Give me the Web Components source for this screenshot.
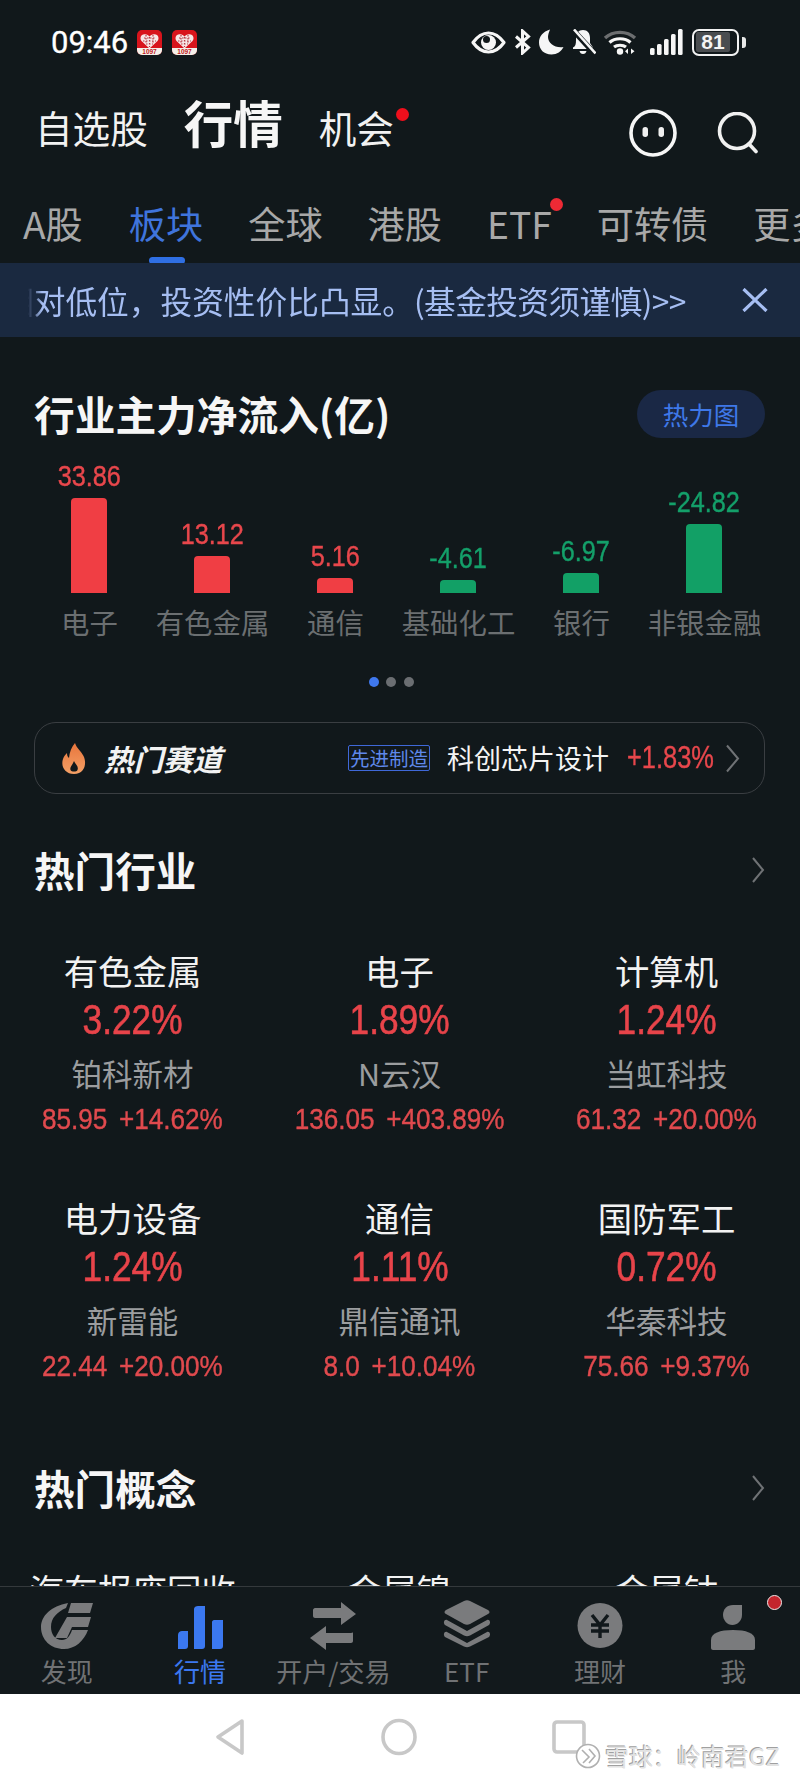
<!DOCTYPE html>
<html lang="zh-CN">
<head>
<meta charset="utf-8">
<title>行情</title>
<style>
  html, body { margin: 0; padding: 0; background: #11181b; }
  body { width: 800px; height: 1780px; overflow: hidden; font-family: "Noto Sans CJK SC", "Noto Sans", sans-serif; }
</style>
</head>
<body>
<stock-app>
  <status-bar></status-bar>
  <top-nav></top-nav>
  <market-tabs></market-tabs>
  <notice-banner>相对低位，投资性价比凸显。<span style="letter-spacing:-.6px">(基金投资须谨慎)&gt;&gt;</span></notice-banner>
  <main-scroll>
    <flow-chart></flow-chart>
    <hot-track></hot-track>
    <section-head>热门行业</section-head>
    <sector-grid>
      <sector-cell name="有色金属" pct="3.22%" stock="铂科新材" price="85.95" chg="+14.62%"></sector-cell>
      <sector-cell name="电子" pct="1.89%" stock="N云汉" price="136.05" chg="+403.89%"></sector-cell>
      <sector-cell name="计算机" pct="1.24%" stock="当虹科技" price="61.32" chg="+20.00%"></sector-cell>
      <sector-cell name="电力设备" pct="1.24%" stock="新雷能" price="22.44" chg="+20.00%"></sector-cell>
      <sector-cell name="通信" pct="1.11%" stock="鼎信通讯" price="8.0" chg="+10.04%"></sector-cell>
      <sector-cell name="国防军工" pct="0.72%" stock="华秦科技" price="75.66" chg="+9.37%"></sector-cell>
    </sector-grid>
    <section-head class="second">热门概念</section-head>
    <sector-grid class="third">
      <sector-cell name="汽车报废回收"></sector-cell>
      <sector-cell name="金属镍"></sector-cell>
      <sector-cell name="金属钴"></sector-cell>
    </sector-grid>
  </main-scroll>
  <bottom-nav></bottom-nav>
  <system-bar></system-bar>
</stock-app>

<script>
// shared font stacks
const CJK = '"Noto Sans CJK SC", "Noto Sans", sans-serif';
// the app's figures are a narrow DIN style face, squeezed with scaleX where they are used
const NUM = '"Liberation Sans", sans-serif';

// small helper, every element below attaches its root the same way
function shadow(el, css, html) {
  el.attachShadow({ mode: 'open' });
  el.shadowRoot.innerHTML = `<style>${css}</style>${html}`;
}

class StockApp extends HTMLElement {
  constructor() {
    super();
    shadow(this, `
      :host { display: flex; flex-direction: column; width: 800px; height: 1780px; position: relative;
        background: #11181b; color: #f2f2f2; font-family: ${CJK}; overflow: hidden; }
    `, `<slot></slot>`);
  }
}

class StatusBar extends HTMLElement {
  constructor() {
    super();
    const heart = `
      <svg width="25" height="25" viewBox="0 0 25 25">
        <rect width="25" height="25" rx="5" fill="#d8141c"/>
        <path d="M0 18H25V20A5 5 0 0 1 20 25H5A5 5 0 0 1 0 20Z" fill="#f4f0ea"/>
        <path d="M12.5 18.5L4.5 11C2.5 8.5 3.5 4.5 7.5 4.2C9.8 4 11.5 5 12.5 6.5C13.5 5 15.2 4 17.5 4.2C21.5 4.5 22.5 8.5 20.5 11Z" fill="#f6e6e6"/>
        <path d="M7 8L18 8M6 11L19 11M9 14L16 14M9 5V14M12.5 7V17M16 5V14" stroke="#b83a44" stroke-width="1.2" stroke-dasharray="1.5 1.5"/>
        <text x="12.5" y="24" font-size="6.5" font-weight="700" text-anchor="middle" fill="#c01820" font-family="Liberation Sans">1097</text>
      </svg>`;
    shadow(this, `
      :host { display: flex; align-items: center; height: 84px; padding: 0 54px 0 51px; box-sizing: border-box; flex: none; }
      .time { font: 400 31px/1 Roboto, sans-serif; color: #fff; margin-right: 9px; -webkit-text-stroke: .3px #fff; }
      .hearts { display: flex; gap: 10px; }
      .right { margin-left: auto; display: flex; align-items: center; }
      svg { display: block; flex: none; }
      .batt { width: 47px; height: 27px; box-sizing: border-box; border: 2.5px solid #f2f2f2; border-radius: 7px;
        margin-left: 9px; position: relative; padding: 1.5px; }
      .batt i { display: block; height: 100%; width: 85%; background: #4a4d50; border-radius: 2px; }
      .batt b { position: absolute; left: 6px; top: 0; width: 26px; text-align: center; font: 700 21px/22px "Liberation Sans", sans-serif; color: #f4f4f4; }
      .nub { width: 4px; height: 11px; background: #e8e8e8; border-radius: 0 3px 3px 0; margin-left: 3px; }
    `, `
      <span class="time">09:46</span>
      <div class="hearts">${heart}${heart}</div>
      <div class="right">
        <svg width="35" height="23" viewBox="0 0 35 23" style="margin-right:8px">
          <path d="M2 11.5C7 4.5 12 2 17.5 2S28 4.5 33 11.5C28 18.5 23 21 17.5 21S7 18.5 2 11.5Z" fill="none" stroke="#f6f6f6" stroke-width="3.2" stroke-linejoin="round"/>
          <circle cx="17.5" cy="11.5" r="7.5" fill="#f6f6f6"/><circle cx="15.5" cy="8.5" r="3.5" fill="#11181b"/>
        </svg>
        <svg width="17" height="26" viewBox="0 0 17 26" style="margin-right:8px">
          <path d="M2 7.5L14.5 18.5L8.5 24V2L14.5 7.5L2 18.5" fill="none" stroke="#f6f6f6" stroke-width="3"/>
        </svg>
        <svg width="25" height="26" viewBox="0 0 25 26" style="margin-right:7px">
          <path d="M11 0.5C4 2.5 0 7.5 0 13.5C0 20.5 5 25.5 12.5 25.5C18 25.5 22.5 22.5 24.5 18C16.5 19.5 9 14.5 9 8C9 5.5 10 3 11 0.5Z" fill="#f6f6f6"/>
        </svg>
        <svg width="25" height="26" viewBox="0 0 25 26" style="margin-right:7px">
          <path d="M12 1C16.5 1 19 4 19 9V14L22 18.5V20H2V18.5C4.5 17.5 5 15 5 11V9C5 4 7.5 1 12 1Z" fill="#f6f6f6"/>
          <path d="M8.5 22H15.5C15 24 14 25 12 25S9 24 8.5 22Z" fill="#f6f6f6"/>
          <path d="M2 1L24 25" stroke="#11181b" stroke-width="5.5"/>
          <path d="M3 0.5L24.5 24.5" stroke="#f6f6f6" stroke-width="2.6"/>
        </svg>
        <svg width="34" height="26" viewBox="0 0 34 26" style="margin-right:13px">
          <path d="M2 9C10 1.5 24 1.5 32 9" fill="none" stroke="#6c6e70" stroke-width="3.4"/>
          <path d="M6.5 13.5C12 8.5 22 8.5 27.5 13.5" fill="none" stroke="#f6f6f6" stroke-width="3.2"/>
          <path d="M11 18C14 15.5 20 15.5 23 18" fill="none" stroke="#f6f6f6" stroke-width="3"/>
          <circle cx="17" cy="22.5" r="3.2" fill="#f6f6f6"/>
          <path d="M25 19.5V25L22 22.2ZM28 19.5V25L31.5 22.2Z" fill="#f6f6f6"/>
        </svg>
        <svg width="33" height="26" viewBox="0 0 33 26">
          <rect x="0" y="19" width="4.6" height="7" rx="1.5" fill="#f6f6f6"/>
          <rect x="7" y="15" width="4.6" height="11" rx="1.5" fill="#f6f6f6"/>
          <rect x="14" y="10" width="4.6" height="16" rx="1.5" fill="#f6f6f6"/>
          <rect x="21" y="5" width="4.6" height="21" rx="1.5" fill="#f6f6f6"/>
          <rect x="28" y="0" width="4.6" height="26" rx="1.5" fill="#f6f6f6"/>
        </svg>
        <div class="batt"><i></i><b>81</b></div><div class="nub"></div>
      </div>
    `);
  }
}

class TopNav extends HTMLElement {
  constructor() {
    super();
    shadow(this, `
      :host { display: flex; align-items: center; height: 86px; padding: 0 41px 0 35px; box-sizing: border-box; flex: none; }
      .links { display: flex; align-items: baseline; gap: 36px; margin-top: -6px; }
      span { font-size: 37.6px; line-height: 60px; color: #f2f2f2; position: relative; }
      .on { font-size: 49.5px; font-weight: 700; color: #f6f6f6; }
      .dot::after { content: ""; position: absolute; left: 77px; top: 11px; width: 13px; height: 13px; border-radius: 50%; background: #ef0f1c; }
      .tools { margin-left: auto; display: flex; align-items: center; gap: 40px; padding-top: 12px; }
      svg { display: block; }
    `, `
      <div class="links"><span>自选股</span><span class="on">行情</span><span class="dot">机会</span></div>
      <div class="tools">
        <svg width="48" height="48" viewBox="0 0 48 48">
          <circle cx="24" cy="24" r="22" fill="none" stroke="#f6f6f6" stroke-width="3.6"/>
          <rect x="13.5" y="18" width="5.5" height="10" rx="2.7" fill="#f0f0f0"/><rect x="29.5" y="18" width="5.5" height="10" rx="2.7" fill="#f0f0f0"/>
        </svg>
        <svg width="42" height="42" viewBox="0 0 42 42">
          <circle cx="20" cy="19" r="17.5" fill="none" stroke="#f0f0f0" stroke-width="3.6"/>
          <path d="M32 32L39 39.5" stroke="#f0f0f0" stroke-width="3.6" stroke-linecap="round"/>
        </svg>
      </div>
    `);
  }
}

class MarketTabs extends HTMLElement {
  constructor() {
    super();
    const tabs = ['A股', '板块', '全球', '港股', 'ETF', '可转债', '更多'];
    shadow(this, `
      :host { display: flex; align-items: flex-start; gap: 45px; height: 93px; padding: 23px 0 0 23px; box-sizing: border-box;
        flex: none; overflow: hidden; white-space: nowrap; position: relative; z-index: 1; }
      span { font-size: 37.2px; line-height: 60px; color: #a8a8a8; position: relative; flex: none; }
      .on { color: #3f74dc; margin-left: 1px; }
      .on::after { content: ""; position: absolute; left: 20px; top: 64px; width: 36px; height: 7px; border-radius: 3.5px; background: #2f6fe4; }
      .dot::after { content: ""; position: absolute; right: -11px; top: 5px; width: 13px; height: 13px; border-radius: 50%; background: #ee2a35; }
    `, tabs.map((t, i) => `<span class="${i === 1 ? 'on' : ''}${t === 'ETF' ? 'dot' : ''}">${t}</span>`).join(''));
  }
}

class NoticeBanner extends HTMLElement {
  constructor() {
    super();
    shadow(this, `
      :host { display: flex; align-items: center; height: 74px; background: #1a2940; flex: none; padding: 0 32px 0 28px; box-sizing: border-box; }
      .view { width: 670px; overflow: hidden; white-space: nowrap; -webkit-mask-image: linear-gradient(90deg, transparent 0, #000 14px); mask-image: linear-gradient(90deg, transparent 0, #000 14px); }
      .text { display: block; margin-left: -26px; font-size: 31.7px; line-height: 44px; color: #a6bef2; }
      svg { margin-left: auto; display: block; flex: none; }
    `, `
      <div class="view"><span class="text"><slot></slot></span></div>
      <svg width="26" height="24" viewBox="0 0 26 24"><path d="M1.5 1L24.5 23M24.5 1L1.5 23" stroke="#a6bef2" stroke-width="3.2"/></svg>
    `);
  }
}

class MainScroll extends HTMLElement {
  constructor() {
    super();
    shadow(this, `
      :host { display: block; flex: 1; min-height: 0; overflow: hidden; padding-top: 53px; box-sizing: border-box; }
      ::slotted(section-head.second) { margin-top: 81px; }
      ::slotted(sector-grid.third) { margin-top: 56px; }
    `, `<slot></slot>`);
  }
}

class FlowChart extends HTMLElement {
  constructor() {
    super();
    const rows = [
      ['33.86', 95, '电子', 'up'], ['13.12', 37, '有色金属', 'up'], ['5.16', 15, '通信', 'up'],
      ['-4.61', 13, '基础化工', 'down'], ['-6.97', 20, '银行', 'down'], ['-24.82', 69, '非银金融', 'down']
    ];
    shadow(this, `
      :host { display: block; }
      .head { display: flex; align-items: center; justify-content: space-between; height: 48px; padding: 0 35px 0 34px; }
      h2 { margin: 0; font-size: 40.7px; line-height: 48px; font-weight: 700; color: #f6f6f6; }
      .btn { width: 128px; height: 48px; border-radius: 24px; background: #1a2845; color: #3f78e8; font-size: 25.5px; line-height: 48px; text-align: center; }
      .bars { display: grid; grid-template-columns: repeat(6, 123px); margin-left: 28px; }
      .col { display: flex; flex-direction: column; align-items: center; }
      .top { height: 155px; display: flex; flex-direction: column; justify-content: flex-end; align-items: center; }
      .val { font: 400 29px/30px ${NUM}; margin-bottom: 7px; white-space: nowrap; transform: scaleX(.87); -webkit-text-stroke: .4px currentColor; }
      .bar { width: 36px; border-radius: 4px 4px 0 0; }
      .up .val { color: #e8474c; } .up .bar { background: #f03e44; }
      .down .val { color: #14a06a; } .down .bar { background: #12a066; }
      .cat { margin-top: 9px; font-size: 28.4px; line-height: 40px; color: #6b6f71; white-space: nowrap; }
      .dots { display: flex; justify-content: center; gap: 7.5px; margin-top: 35px; padding-right: 18px; }
      .dots i { width: 10px; height: 10px; border-radius: 50%; background: #6b6e72; }
      .dots i:first-child { background: #3f78ee; }
    `, `
      <div class="head"><h2>行业主力净流入(亿)</h2><div class="btn">热力图</div></div>
      <div class="bars">
        ${rows.map(r => `<div class="col ${r[3]}"><div class="top"><span class="val">${r[0]}</span><div class="bar" style="height:${r[1]}px"></div></div><span class="cat">${r[2]}</span></div>`).join('')}
      </div>
      <div class="dots"><i></i><i></i><i></i></div>
    `);
  }
}

class HotTrack extends HTMLElement {
  constructor() {
    super();
    shadow(this, `
      :host { display: flex; align-items: center; height: 72px; margin: 35px 35px 0 34px; box-sizing: border-box;
        border: 1.5px solid #3a3e42; border-radius: 22px; padding: 0 24px 0 27px; white-space: nowrap; }
      svg { display: block; flex: none; }
      .title { margin-left: 18px; font-size: 29.5px; font-weight: 700; font-style: italic; color: #f2f2f2; line-height: 40px; }
      .tag { margin-left: auto; width: 82px; height: 26px; box-sizing: border-box; border: 1.5px solid #3f68d8; border-radius: 2px;
        font-size: 19.5px; line-height: 23px; color: #5f88ea; text-align: center; }
      .name { margin-left: 17px; font-size: 27px; line-height: 40px; color: #f4f4f4; }
      .pct { margin-left: 18px; width: 86px; flex: none; font: 400 31px/40px ${NUM}; color: #e8474c; transform: scaleX(.82); transform-origin: left center; -webkit-text-stroke: .4px currentColor; }
      .chev { margin-left: 12px; }
    `, `
      <svg width="24" height="31" viewBox="0 0 24 31">
        <defs><linearGradient id="fl" x1="0" y1="0" x2="0" y2="1"><stop offset="0" stop-color="#e8753c"/><stop offset="1" stop-color="#f4a066"/></linearGradient></defs>
        <path d="M13 0C14.5 5 19 8 21.5 13C25 20 23 31 12 31C3 31 -1.5 23 1 16C2 13 3.5 11.5 5 10C5 12 5.5 14 7 15C7.5 9 9.5 4 13 0Z" fill="url(#fl)"/>
        <path d="M12 18C13 21 17 23 15.5 27C14.8 29 9.5 29.3 8.5 27C7.5 24 10.5 22 12 18Z" fill="#11181b"/>
      </svg>
      <span class="title">热门赛道</span>
      <span class="tag">先进制造</span>
      <span class="name">科创芯片设计</span>
      <span class="pct">+1.83%</span>
      <svg class="chev" width="15" height="29" viewBox="0 0 15 29"><path d="M2 1.5L13 14.5L2 27.5" fill="none" stroke="#6f7275" stroke-width="2"/></svg>
    `);
  }
}

class SectionHead extends HTMLElement {
  constructor() {
    super();
    shadow(this, `
      :host { display: flex; align-items: center; justify-content: space-between; height: 50px; margin-top: 51px; padding: 0 35px 0 34px; }
      h2 { margin: 0; font-size: 40.6px; line-height: 50px; font-weight: 700; color: #f6f6f6; }
      svg { display: block; }
    `, `
      <h2><slot></slot></h2>
      <svg width="14" height="28" viewBox="0 0 14 28"><path d="M2 2L12 14L2 26" fill="none" stroke="#6f7275" stroke-width="2"/></svg>
    `);
  }
}

class SectorGrid extends HTMLElement {
  constructor() {
    super();
    shadow(this, `
      :host { display: grid; grid-template-columns: repeat(3, 267px); row-gap: 62px; margin: 55px 0 0 -1px; }
    `, `<slot></slot>`);
  }
}

class SectorCell extends HTMLElement {
  connectedCallback() {
    const a = n => this.getAttribute(n);
    const detail = a('pct') ? `
      <div class="pct">${a('pct')}</div>
      <div class="stock">${a('stock')}</div>
      <div class="line"><span>${a('price')}</span><span>${a('chg')}</span></div>` : '';
    shadow(this, `
      :host { display: flex; flex-direction: column; align-items: center; white-space: nowrap; }
      .name { font-size: 34.4px; line-height: 40px; color: #f2f2f2; }
      .pct { margin-top: 8px; font: 400 42px/44px ${NUM}; color: #e8444a; transform: scaleX(.84); -webkit-text-stroke: .6px currentColor; }
      .stock { margin-top: 13px; font-size: 30.5px; line-height: 36px; color: #9b9d9f; }
      .line { margin-top: 12px; display: flex; gap: 13px; font: 400 29px/32px ${NUM}; color: #e04a4e; transform: scaleX(.9); -webkit-text-stroke: .4px currentColor; }
    `, `<div class="name">${a('name')}</div>${detail}`);
  }
}

class BottomNav extends HTMLElement {
  constructor() {
    super();
    const g = '#7a7b7d';
    const items = [
      ['发现', `<svg width="54" height="50" viewBox="0 0 54 50"><g transform="translate(1 3)" fill="${g}">
        <path d="M27 0C10 3 0 13 0 24C0 37 10 46 23 46C34 46 43 38 47 27H31C29 33 26 37 21 37C14 37 10 31 10 24C10 15 16 9 25 5Z"/>
        <path d="M30 0H52L49 10H27Z"/><path d="M26 14H50L47 24H31L26 35H14Z"/></g></svg>`],
      ['行情', `<svg width="50" height="50" viewBox="0 0 50 50" fill="#3b78f0">
        <path d="M3 35C3 32.5 5 31 7 31H13V46C13 48 12 49 10 49H3Z"/>
        <path d="M19 9C19 7 21 6 23 6H30V46C30 48 29 49 27 49H19Z"/>
        <path d="M37 22C37 21 38 20 39 20H48V46C48 48 47 49 45 49H37Z"/></svg>`],
      ['开户/交易', `<svg width="50" height="50" viewBox="0 0 50 50" fill="${g}">
        <path d="M5 10C5 9 6 8 7 8H33V2L48 14L33 25V18H7C6 18 5 17 5 16Z"/>
        <path d="M45 33C45 32 44 33 43 33H18V26L2 38L18 50V43H43C44 43 45 42 45 41Z"/></svg>`],
      ['ETF', `<svg width="50" height="50" viewBox="0 0 50 50" fill="${g}">
        <path d="M22 1C24 0 26 0 28 1L46 10C48 11.5 48 13 46 14L28 24C26 25 24 25 22 24L4 14C2 13 2 11.5 4 10Z"/>
        <path d="M5 20L25 31L45 20C48 19 49 23 47 25L28 35.5C26 36.5 24 36.5 22 35.5L3 25C1 23 2 19 5 20Z"/>
        <path d="M5 32L25 43L45 32C48 31 49 35 47 37L28 46.5C26 47.5 24 47.5 22 46.5L3 37C1 35 2 31 5 32Z"/></svg>`],
      ['理财', `<svg width="50" height="50" viewBox="0 0 50 50"><circle cx="25" cy="25.5" r="22.5" fill="${g}"/>
        <path d="M17 15L25 25L33 15M16 25H34M16 31H34M25 25V38" fill="none" stroke="#11181b" stroke-width="3.4"/></svg>`],
      ['我', `<svg width="50" height="50" viewBox="0 0 50 50" fill="${g}">
        <path d="M34 5V15C34 21 29 25 24.5 25C19 25 15 20 15 15C15 9 19 5 25 5Z"/>
        <path d="M3 40C3 33 12 30 25 30S47 33 47 40V48C47 49 46 50 45 50H5C4 50 3 49 3 48Z"/></svg>`]
    ];
    shadow(this, `
      :host { display: grid; grid-template-columns: repeat(6, 1fr); height: 108px; box-sizing: border-box; flex: none;
        background: #12191c; border-top: 1px solid #34393c; padding-top: 13px; position: relative; }
      .item { display: flex; flex-direction: column; align-items: center; color: #707274; font-size: 26px; line-height: 30px; }
      .item svg { display: block; height: 50px; }
      .item span { margin-top: 6px; white-space: nowrap; }
      .on { color: #3b78f0; }
      .badge { position: absolute; left: 767px; top: 8px; width: 15px; height: 15px; box-sizing: border-box; border-radius: 50%; background: #c3252d; border: 1.5px solid #f0e8e8; }
    `, items.map((it, i) => `<div class="item${i === 1 ? ' on' : ''}">${it[1]}<span>${it[0]}</span></div>`).join('') + `<div class="badge"></div>`);
  }
}

class SystemBar extends HTMLElement {
  constructor() {
    super();
    shadow(this, `
      :host { display: flex; justify-content: center; align-items: center; gap: 135px; height: 86px; background: #fff; flex: none; position: relative; }
      svg { display: block; }
      .mark { position: absolute; left: 575px; top: 48px; display: flex; align-items: center; gap: 4px; }
      .mark span { font-size: 24px; line-height: 28px; color: #e2e2e2; white-space: nowrap; text-shadow: -1px -1px 0 #a0a0a0; }
    `, `
      <svg width="32" height="38" viewBox="0 0 32 38"><path d="M28 3L4 19L28 35Z" fill="none" stroke="#c8c8c8" stroke-width="3.6" stroke-linejoin="round"/></svg>
      <svg width="36" height="38" viewBox="0 0 36 38"><ellipse cx="18" cy="19" rx="16" ry="16.5" fill="none" stroke="#c8c8c8" stroke-width="3.6"/></svg>
      <svg width="34" height="34" viewBox="0 0 34 34"><rect x="2" y="2" width="30" height="30" rx="3" fill="none" stroke="#c8c8c8" stroke-width="3.6"/></svg>
      <div class="mark">
        <svg width="26" height="26" viewBox="0 0 26 26"><circle cx="13" cy="13" r="11.5" fill="#fff" stroke="#b0b0b0" stroke-width="1.6"/><path d="M7 7L14 14L8 20M14 6L20 13L14 20" fill="none" stroke="#b0b0b0" stroke-width="1.6"/></svg>
        <span>雪球：岭南君GZ</span>
      </div>
    `);
  }
}

customElements.define('stock-app', StockApp);
customElements.define('status-bar', StatusBar);
customElements.define('top-nav', TopNav);
customElements.define('market-tabs', MarketTabs);
customElements.define('notice-banner', NoticeBanner);
customElements.define('main-scroll', MainScroll);
customElements.define('flow-chart', FlowChart);
customElements.define('hot-track', HotTrack);
customElements.define('section-head', SectionHead);
customElements.define('sector-grid', SectorGrid);
customElements.define('sector-cell', SectorCell);
customElements.define('bottom-nav', BottomNav);
customElements.define('system-bar', SystemBar);
</script>
</body>
</html>
